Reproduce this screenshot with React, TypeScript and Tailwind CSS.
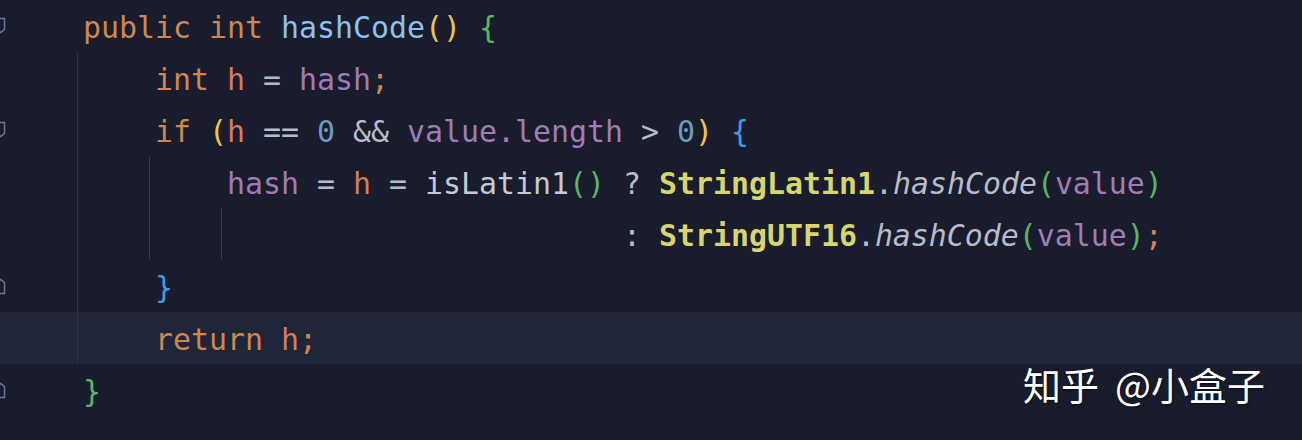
import React from "react";

type Tok = [string, string];

const C = {
  kw: "text-[#d0874f]",
  fn: "text-[#8ec1f0]",
  y: "text-[#efc545]",
  g: "text-[#5cb462]",
  b: "text-[#3f9be6]",
  loc: "text-[#d97a5e]",
  op: "text-[#b7bcc8]",
  fld: "text-[#a07db4]",
  num: "text-[#6b9bc0]",
  plain: "text-[#c5c9d3]",
  cls: "text-[#d8d56c] font-bold",
  it: "text-[#b7bcc8] italic",
};

type Row = {
  guides: number;
  fold?: "open" | "close";
  active?: boolean;
  toks: Tok[];
};

const rows: Row[] = [
  {
    guides: 0,
    fold: "open",
    toks: [
      ["public int ", C.kw],
      ["hashCode", C.fn],
      ["()", C.y],
      [" ", C.op],
      ["{", C.g],
    ],
  },
  {
    guides: 1,
    toks: [
      ["int ", C.kw],
      ["h", C.loc],
      [" = ", C.op],
      ["hash", C.fld],
      [";", C.kw],
    ],
  },
  {
    guides: 1,
    fold: "open",
    toks: [
      ["if ", C.kw],
      ["(", C.y],
      ["h", C.loc],
      [" == ", C.op],
      ["0", C.num],
      [" && ", C.op],
      ["value.length", C.fld],
      [" > ", C.op],
      ["0", C.num],
      [")", C.y],
      [" ", C.op],
      ["{", C.b],
    ],
  },
  {
    guides: 2,
    toks: [
      ["hash", C.fld],
      [" = ", C.op],
      ["h", C.loc],
      [" = ", C.op],
      ["isLatin1", C.plain],
      ["()", C.g],
      [" ? ", C.op],
      ["StringLatin1", C.cls],
      [".", C.op],
      ["hashCode", C.it],
      ["(", C.g],
      ["value", C.fld],
      [")", C.g],
    ],
  },
  {
    guides: 3,
    toks: [
      ["                  : ", C.op],
      ["StringUTF16", C.cls],
      [".", C.op],
      ["hashCode", C.it],
      ["(", C.g],
      ["value", C.fld],
      [")", C.g],
      [";", C.kw],
    ],
  },
  {
    guides: 1,
    fold: "close",
    toks: [["}", C.b]],
  },
  {
    guides: 1,
    active: true,
    toks: [
      ["return ", C.kw],
      ["h", C.loc],
      [";", C.kw],
    ],
  },
  {
    guides: 0,
    fold: "close",
    toks: [["}", C.g]],
  },
];

const guideColors = ["border-[#2c3344]", "border-[#2f3d55]", "border-[#2f3d55]"];

function Fold({ kind }: { kind: "open" | "close" }) {
  return (
    <svg width="14" height="18" viewBox="0 0 14 18" className="-ml-[8px]" fill="none" stroke="#6a7598" strokeWidth="1.5">
      {kind === "open" ? (
        <path d="M1.5 1.5h11v11l-5.5 4l-5.5-4z" />
      ) : (
        <path d="M1.5 16.5h11v-11l-5.5-4l-5.5 4z" />
      )}
    </svg>
  );
}

export default function App() {
  return (
    <div className="relative w-[1302px] h-[440px] overflow-hidden bg-[#181c2c] font-['DejaVu_Sans_Mono',monospace] text-[29.9px]">
      {rows.map((r, i) => (
        <div key={i} className={`flex h-[52px] items-center ${r.active ? "bg-[#1f2639]" : ""}`}>
          <div className="w-[77px] h-full flex items-center overflow-hidden">
            {r.fold && <Fold kind={r.fold} />}
          </div>
          {Array.from({ length: r.guides }).map((_, k) => (
            <div key={k} className={`w-[72px] h-full border-l ${guideColors[k]}`} />
          ))}
          <div className="pl-[6px] pt-[4px] whitespace-pre leading-none">
            {r.toks.map(([t, c], j) => (
              <span key={j} className={c}>
                {t}
              </span>
            ))}
          </div>
        </div>
      ))}
      <div className="absolute left-[1023px] top-[355px] flex gap-[16px] text-white text-[38px] font-['Noto_Sans_CJK_SC',sans-serif] whitespace-pre [text-shadow:1px_1px_2px_rgba(0,0,0,0.6)]">
        <span>知乎</span>
        <span>@小盒子</span>
      </div>
    </div>
  );
}
